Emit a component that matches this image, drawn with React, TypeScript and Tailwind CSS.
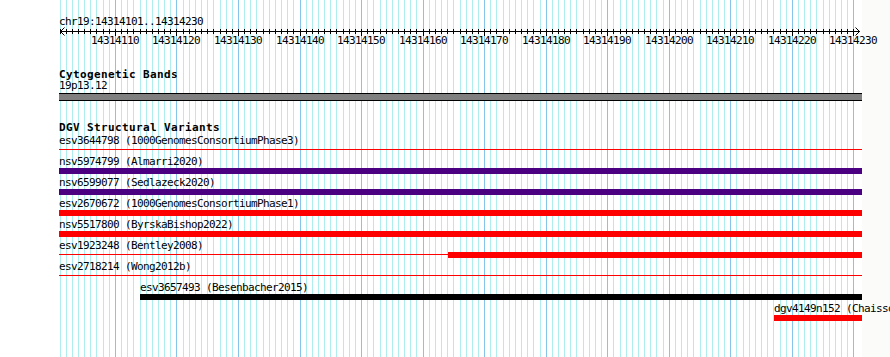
import React from 'react';

const PX = 800 / 130;
const bases = Array.from({ length: 130 }, (_, i) => i);
const xOf = (i: number) => Math.floor(60 + i * PX);
const isMajor = (i: number) => (101 + i) % 10 === 0;

type Seg = { from: number; to: number; thick: boolean; color: string };
type Row = { label: string; x: number; segs: Seg[] };

const R = '#ff0000';
const I = '#4b0082';
const K = '#000000';

const rows: Row[] = [
  { label: 'esv3644798 (1000GenomesConsortiumPhase3)', x: 59, segs: [{ from: 59, to: 862, thick: false, color: R }] },
  { label: 'nsv5974799 (Almarri2020)', x: 59, segs: [{ from: 59, to: 862, thick: true, color: I }] },
  { label: 'nsv6599077 (Sedlazeck2020)', x: 59, segs: [{ from: 59, to: 862, thick: true, color: I }] },
  { label: 'esv2670672 (1000GenomesConsortiumPhase1)', x: 59, segs: [{ from: 59, to: 862, thick: true, color: R }] },
  { label: 'nsv5517800 (ByrskaBishop2022)', x: 59, segs: [{ from: 59, to: 862, thick: true, color: R }] },
  {
    label: 'esv1923248 (Bentley2008)',
    x: 59,
    segs: [
      { from: 59, to: 448, thick: false, color: R },
      { from: 448, to: 862, thick: true, color: R },
    ],
  },
  { label: 'esv2718214 (Wong2012b)', x: 59, segs: [{ from: 59, to: 862, thick: false, color: R }] },
  { label: 'esv3657493 (Besenbacher2015)', x: 140, segs: [{ from: 140, to: 862, thick: true, color: K }] },
  { label: 'dgv4149n152 (Chaisson2019)', x: 774, segs: [{ from: 774, to: 862, thick: true, color: R }] },
];

const txt = "font-['DejaVu_Sans_Mono','Liberation_Mono',monospace] text-[11px] tracking-[-0.62px] text-black whitespace-nowrap";
const bold = "font-['DejaVu_Sans_Mono','Liberation_Mono',monospace] text-[11px] font-bold tracking-[0.38px] text-black whitespace-nowrap";

function Grid() {
  return (
    <svg className="absolute left-0 top-0 pointer-events-none" width={862} height={357}>
      {bases.map((i) => (
        <line
          key={i}
          x1={xOf(i) + 0.5}
          x2={xOf(i) + 0.5}
          y1={0}
          y2={357}
          stroke={isMajor(i) ? '#86c5ea' : '#aeeeee'}
          strokeWidth={1}
          shapeRendering="crispEdges"
        />
      ))}
    </svg>
  );
}

function Ruler() {
  const majors = bases.filter(isMajor);
  return (
    <div className="relative h-[22px]">
      <svg className="block" width={862} height={22}>
        <line x1={60} x2={860} y1={5.5} y2={5.5} stroke="#000" strokeWidth={1} shapeRendering="crispEdges" />
        {bases.map((i) => (
          <line
            key={i}
            x1={xOf(i) + 0.5}
            x2={xOf(i) + 0.5}
            y1={3}
            y2={isMajor(i) ? 10 : 8}
            stroke="#000"
            strokeWidth={1}
            shapeRendering="crispEdges"
          />
        ))}
        <polyline points="64.5,1.5 60.5,5.5 64.5,9.5" fill="none" stroke="#000" strokeWidth={1} />
        <polyline points="855.5,1.5 859.5,5.5 855.5,9.5" fill="none" stroke="#000" strokeWidth={1} />
      </svg>
      {majors.map((i) => (
        <span
          key={i}
          className={`absolute top-[8px] leading-[13px] ${txt}`}
          style={{ left: xOf(i) - 24 }}
        >
          {14314101 + i}
        </span>
      ))}
    </div>
  );
}

function TrackRow({ row }: { row: Row }) {
  return (
    <div className="h-[21px]">
      <div className={`h-[14px] pt-[1px] leading-[13px] ${txt}`} style={{ paddingLeft: row.x }}>
        {row.label}
      </div>
      <div className="flex h-[6px]">
        {row.segs.map((s, idx) => (
          <div
            key={idx}
            className="h-[6px] shrink-0"
            style={{ marginLeft: idx === 0 ? s.from : 0, width: s.to - s.from }}
          >
            {s.thick ? (
              <div className="h-[6px]" style={{ backgroundColor: s.color }} />
            ) : (
              <div className="mt-[2px] h-[1px]" style={{ backgroundColor: s.color }} />
            )}
          </div>
        ))}
      </div>
    </div>
  );
}

export default function App() {
  return (
    <div className="w-[890px] h-[357px] overflow-hidden bg-[#fbfcfa]">
      <div className="relative w-[862px] h-[357px] bg-white">
        <Grid />
        <div className="relative flex flex-col pt-[15px]">
          <div className={`h-[11px] leading-[13px] pl-[59px] ${txt}`}>chr19:14314101..14314230</div>
          <Ruler />

          <div className={`mt-[21px] h-[11px] leading-[11px] pl-[59px] ${bold}`}>Cytogenetic Bands</div>
          <div className={`h-[12px] leading-[12px] pl-[59px] ${txt}`}>19p13.12</div>
          <div className="mt-[1px] ml-[59px] w-[803px] h-[8px] border-y border-black bg-[#808080]" />

          <div className={`mt-[21px] h-[11px] leading-[11px] pl-[59px] ${bold}`}>DGV Structural Variants</div>
          {rows.map((r) => (
            <TrackRow key={r.label} row={r} />
          ))}
        </div>
      </div>
    </div>
  );
}
